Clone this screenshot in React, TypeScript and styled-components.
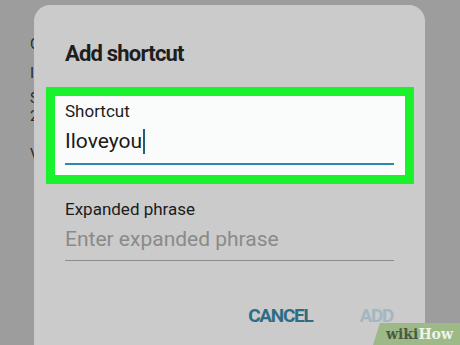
import React from "react";
import styled, { createGlobalStyle } from "styled-components";

const GlobalStyle = createGlobalStyle`
    html, body {
        margin: 0;
        padding: 0;
        width: 460px;
        height: 345px;
        overflow: hidden;
        font-family: Roboto, "Liberation Sans", sans-serif;
    }
`

// only the first letters of the page behind peek out past the dialog edge
const backdropLines = [
    { text: "C", gap: 34.6 },
    { text: "I", gap: 11 },
    { text: "S", gap: 7 },
    { text: "2", gap: 0 },
    { text: "V", gap: 20 },
];

const App = () => {
    return (
        <Screen>
            <GlobalStyle />
            <Backdrop>
                {backdropLines.map((line) => (
                    <BackdropLine key={line.text} $gap={line.gap}>{line.text}</BackdropLine>
                ))}
            </Backdrop>

            <Dialog>
                <Title>Add shortcut</Title>

                <Highlight>
                    <FieldLabel>Shortcut</FieldLabel>
                    <FieldValue>
                        Iloveyou<Caret />
                    </FieldValue>
                    <FieldLine $active />
                </Highlight>

                <Section>
                    <FieldLabel>Expanded phrase</FieldLabel>
                    <Placeholder>Enter expanded phrase</Placeholder>
                    <FieldLine />
                </Section>

                <Actions>
                    <ActionButton>CANCEL</ActionButton>
                    <ActionButton $disabled>ADD</ActionButton>
                </Actions>
            </Dialog>

            <Watermark>
                <WikiPart>wiki</WikiPart><HowPart>How</HowPart>
            </Watermark>
        </Screen>
    )
}

export default App;

const Screen = styled.div`
    position: relative;
    width: 460px;
    height: 345px;
    overflow: hidden;
    background: #9d9d9d;
`

const Backdrop = styled.div`
    display: flex;
    flex-direction: column;
    padding-left: 30px;
`

const BackdropLine = styled.p<{ $gap: number }>`
    margin: ${(p) => p.$gap}px 0 0 0;
    font-size: 15px;
    line-height: 18px;
    color: #2b2b2b;
    white-space: nowrap;
`

const Dialog = styled.div`
    position: absolute;
    top: 5px;
    left: 34px;
    width: 391px;
    height: 380px;
    box-sizing: border-box;
    padding: 35.5px 11px 0 12px;
    border-radius: 16px;
    background: #cbcbcb;
    display: flex;
    flex-direction: column;
`

const Title = styled.h2`
    margin: 0 0 20.5px 19px;
    font-size: 22px;
    line-height: 26px;
    font-weight: 700;
    letter-spacing: -0.8px;
    color: #1e1e1e;
`

const Highlight = styled.div`
    display: flex;
    flex-direction: column;
    border: 9px solid #1af22b;
    background: #fafbfb;
    padding: 5px 11px 10px 10px;
`

const FieldLabel = styled.div`
    font-size: 17px;
    line-height: 20px;
    color: #1c1c1c;
`

const FieldValue = styled.div`
    margin-top: 7.6px;
    display: flex;
    align-items: center;
    font-size: 21px;
    line-height: 24px;
    color: #1a1a1a;
`

const Caret = styled.span`
    display: inline-block;
    width: 1.5px;
    height: 25px;
    margin-left: 1px;
    background: #1f5f80;
`

const FieldLine = styled.div<{ $active?: boolean }>`
    margin-top: ${(p) => (p.$active ? 9 : 8.5)}px;
    height: ${(p) => (p.$active ? 2 : 1.5)}px;
    background: ${(p) => (p.$active ? "#2b89ae" : "#8c8c8c")};
`

const Section = styled.div`
    display: flex;
    flex-direction: column;
    margin: 15px 20px 0 19px;
`

const Placeholder = styled.div`
    margin-top: 8.6px;
    font-size: 21px;
    line-height: 24px;
    color: #8a8a8a;
`

const Actions = styled.div`
    display: flex;
    justify-content: flex-end;
    gap: 47px;
    margin: 43.5px 21px 0 0;
`

const ActionButton = styled.span<{ $disabled?: boolean }>`
    font-size: 19px;
    line-height: 22px;
    font-weight: 700;
    letter-spacing: -1.3px;
    color: ${(p) => (p.$disabled ? "#a2b7c1" : "#2d6d86")};
`

const Watermark = styled.div`
    position: absolute;
    right: 0;
    bottom: 0;
    width: 87px;
    height: 22px;
    box-sizing: border-box;
    padding-left: 13px;
    display: flex;
    align-items: center;
    background: #9cb987;
    clip-path: polygon(7px 0, 100% 0, 100% 100%, 0 100%);
    font-family: "DejaVu Serif", "Liberation Serif", serif;
    font-weight: 700;
    font-size: 14px;
    line-height: 22px;
`

const WikiPart = styled.span`
    color: #4a5a43;
`

const HowPart = styled.span`
    color: #eef3ea;
`
